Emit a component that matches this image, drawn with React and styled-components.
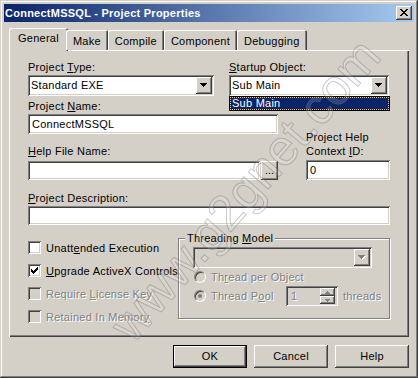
import React from 'react';
import styled, { createGlobalStyle, css } from 'styled-components';

const GlobalStyle = createGlobalStyle`
  html, body { margin: 0; padding: 0; background: #d4d0c8; }
  body { font-family: "Liberation Sans", Arial, sans-serif; font-size: 11px; letter-spacing: 0.25px; color: #000; }
  * { box-sizing: border-box; }
`;

const FACE = '#d4d0c8';

const raised = css`
  box-shadow: inset -1px -1px #404040, inset 1px 1px #fff, inset -2px -2px #808080;
`;
const sunken = css`
  box-shadow: inset 1px 1px #808080, inset -1px -1px #fff, inset 2px 2px #404040, inset -2px -2px ${FACE};
`;
const disabledText = css`
  color: #808080;
  text-shadow: 1px 1px #fff;
`;

const Window = styled.div`
  position: relative;
  overflow: hidden;
  width: 418px;
  height: 378px;
  padding: 4px;
  background: ${FACE};
  box-shadow: inset -1px -1px #404040, inset 1px 1px ${FACE}, inset -2px -2px #808080, inset 2px 2px #fff;
`;

const TitleBar = styled.div`
  display: flex;
  align-items: center;
  height: 18px;
  padding: 0 2px 0 1px;
  background: linear-gradient(to right, #0a246a, #a6caf0);
`;

const TitleText = styled.div`
  color: #fff;
  font-weight: bold;
  font-size: 11px;
  letter-spacing: 0.25px;
`;

const CloseButton = styled.div`
  margin-left: auto;
  width: 16px;
  height: 14px;
  margin-top: -1px;
  background: ${FACE};
  ${raised};
  display: flex;
  align-items: center;
  justify-content: center;
  padding-right: 1px;
`;

const Body = styled.div`
  padding: 6px 5px 0 5px;
`;

const TabStrip = styled.div`
  display: flex;
  align-items: flex-start;
  height: 22px;
  padding-left: 2px;
  position: relative;
  z-index: 2;
`;

const Tab = styled.div`
  height: ${p => (p.$active ? 23 : 20)}px;
  margin: ${p => (p.$active ? '0 -2px 0 -2px' : '2px 0 0 0')};
  padding: ${p => (p.$active ? '3px 9px 0' : '4px 7px 0')};
  line-height: 14px;
  background: ${FACE};
  border-radius: 2px 2px 0 0;
  box-shadow: inset 1px 1px #fff, inset -1px 0 #404040, inset -2px 0 #808080;
  white-space: nowrap;
`;

const Panel = styled.div`
  width: 400px;
  height: 287px;
  padding: 10px 19px 0 19px;
  background: ${FACE};
  box-shadow: inset 1px 1px #fff, inset -1px -1px #404040, inset -2px -2px #808080;
  display: flex;
  flex-direction: column;
`;

const Row = styled.div`
  display: flex;
  align-items: ${p => p.$align || 'flex-start'};
  gap: ${p => p.$gap || 0}px;
  margin-top: ${p => p.$mt || 0}px;
`;

const Column = styled.div`
  display: flex;
  flex-direction: column;
  width: ${p => (p.$w ? `${p.$w}px` : 'auto')};
  margin-top: ${p => p.$mt || 0}px;
`;

const Field = styled.div`
  position: relative;
  display: flex;
  flex-direction: column;
  width: ${p => p.$w}px;
  margin-top: ${p => p.$mt || 0}px;
`;

const Label = styled.div`
  line-height: 14px;
  margin-bottom: ${p => p.$mb ?? 1}px;
  white-space: nowrap;
`;

const ComboBox = styled.div`
  display: flex;
  width: ${p => p.$w}px;
  height: 21px;
  padding: 2px;
  background: ${p => (p.$disabled ? FACE : '#fff')};
  ${sunken};
`;

const ComboText = styled.div`
  flex: 1;
  padding-left: 1px;
  line-height: 17px;
  white-space: nowrap;
`;

const DropButton = styled.div`
  width: 16px;
  height: 17px;
  background: ${FACE};
  ${raised};
  display: flex;
  align-items: center;
  justify-content: center;
  padding: 0 1px 1px 0;
`;

const DropList = styled.div`
  position: absolute;
  left: 0;
  top: 100%;
  width: 161px;
  height: 15px;
  border: 1px solid #000;
  background: #fff;
  z-index: 3;
`;

const DropItem = styled.div`
  height: 13px;
  line-height: 11px;
  background: #0a246a;
  color: #fff;
  border: 1px dotted #e8c878;
  padding-left: 1px;
`;

const TextBox = styled.div`
  width: ${p => p.$w}px;
  height: ${p => p.$h || 20}px;
  padding: 2px 4px;
  line-height: ${p => (p.$h || 20) - 4}px;
  background: ${p => (p.$disabled ? FACE : '#fff')};
  ${sunken};
  white-space: nowrap;
`;

const InputGroup = styled.div`
  display: flex;
  gap: 1px;
`;

const SmallButton = styled.div`
  width: 17px;
  height: 19px;
  background: ${FACE};
  ${raised};
  text-align: center;
  line-height: 19px;
  letter-spacing: 0;
`;

const BottomRow = styled.div`
  display: flex;
  margin-top: 6px;
`;

const CheckList = styled.div`
  width: 150px;
  margin-top: 5px;
  display: flex;
  flex-direction: column;
`;

const CheckRow = styled.div`
  display: flex;
  align-items: center;
  gap: 5px;
  height: 23px;
  white-space: nowrap;
  ${p => p.$disabled && disabledText};
`;

const CheckBoxBox = styled.div`
  width: 13px;
  height: 13px;
  flex: none;
  background: ${p => (p.$disabled ? FACE : '#fff')};
  ${sunken};
  display: flex;
  align-items: center;
  justify-content: center;
`;

const GroupBox = styled.fieldset`
  width: 212px;
  height: 88px;
  margin: 0;
  padding: 0;
  border: 1px solid #808080;
  box-shadow: 1px 1px 0 #fff, inset 1px 1px 0 #fff;
  min-width: 0;
`;

const Legend = styled.legend`
  margin-left: 6px;
  padding: 0 2px;
  line-height: 14px;
  background: ${FACE};
  position: relative;
  z-index: 1;
`;

const GroupContent = styled.div`
  padding: 2px 0 0 14px;
  display: flex;
  flex-direction: column;
`;

const RadioRow = styled.div`
  display: flex;
  align-items: center;
  height: ${p => p.$h}px;
  white-space: nowrap;
`;

const RadioLabel = styled.div`
  display: flex;
  align-items: center;
  gap: 5px;
  width: ${p => (p.$w ? `${p.$w}px` : 'auto')};
  padding-left: 1px;
  ${disabledText};
`;

const RadioCircle = styled.div`
  width: 12px;
  height: 12px;
  flex: none;
  border-radius: 50%;
  background: ${FACE};
  border: 1px solid;
  border-color: #808080 #fff #fff #808080;
  box-shadow: inset 1px 1px #404040;
  display: flex;
  align-items: center;
  justify-content: center;
`;

const RadioDot = styled.div`
  width: 4px;
  height: 4px;
  border-radius: 50%;
  background: #808080;
`;

const SpinBox = styled.div`
  display: flex;
  width: 52px;
  height: 20px;
  padding: 2px;
  background: ${FACE};
  ${sunken};
`;

const SpinText = styled.div`
  flex: 1;
  padding-left: 3px;
  line-height: 16px;
  ${disabledText};
`;

const SpinButtons = styled.div`
  display: flex;
  flex-direction: column;
  width: 15px;
  margin-right: 1px;
`;

const SpinButton = styled.div`
  flex: 1;
  background: ${FACE};
  ${raised};
  display: flex;
  align-items: center;
  justify-content: center;
`;

const MutedText = styled.span`
  margin-left: 5px;
  ${disabledText};
`;

const ButtonRow = styled.div`
  display: flex;
  justify-content: flex-end;
  gap: 7px;
  margin-top: 8px;
`;

const Button = styled.div`
  width: 74px;
  height: 23px;
  background: ${FACE};
  text-align: center;
  line-height: 23px;
  box-shadow: ${p =>
    p.$default
      ? 'inset 0 0 0 1px #000, inset -2px -2px #404040, inset 2px 2px #fff, inset -3px -3px #808080'
      : 'inset -1px -1px #404040, inset 1px 1px #fff, inset -2px -2px #808080'};
`;

const Watermark = styled.div`
  position: absolute;
  left: 245px;
  top: 190px;
  transform: translate(-50%, -50%) rotate(-49deg);
  font-family: "Liberation Sans", Arial, sans-serif;
  font-size: 50px;
  letter-spacing: 0;
  white-space: nowrap;
  color: rgba(255, 255, 255, 0.15);
  -webkit-text-stroke: 1px rgba(110, 110, 110, 0.38);
  pointer-events: none;
  z-index: 10;
`;

const Arrow = ({ disabled }) => (
  <svg width="8" height="5" viewBox="0 0 8 5">
    {disabled && (
      <path fill="#fff" d="M1 1h7v1H1z M2 2h5v1H2z M3 3h3v1H3z M4 4h1v1H4z" />
    )}
    <path
      fill={disabled ? '#808080' : '#000'}
      d="M0 0h7v1H0z M1 1h5v1H1z M2 2h3v1H2z M3 3h1v1H3z"
    />
  </svg>
);

const SmallArrow = ({ up }) => (
  <svg width="5" height="3" viewBox="0 0 5 3">
    <path
      fill="#808080"
      d={up ? 'M2 0h1v1H2z M1 1h3v1H1z M0 2h5v1H0z' : 'M0 0h5v1H0z M1 1h3v1H1z M2 2h1v1H2z'}
    />
  </svg>
);

const CloseGlyph = () => (
  <svg width="8" height="7" viewBox="0 0 8 7">
    <path
      fill="#000"
      d="M0 0h2v1H0z M6 0h2v1H6z M1 1h2v1H1z M5 1h2v1H5z M2 2h4v1H2z M3 3h2v1H3z M2 4h4v1H2z M1 5h2v1H1z M5 5h2v1H5z M0 6h2v1H0z M6 6h2v1H6z"
    />
  </svg>
);

const CheckGlyph = () => (
  <svg width="7" height="7" viewBox="0 0 7 7">
    <path
      fill="#000"
      d="M6 0h1v3H6z M5 1h1v3H5z M4 2h1v3H4z M0 2h1v3H0z M1 3h1v3H1z M2 4h1v3H2z M3 3h1v3H3z"
    />
  </svg>
);

const Combo = ({ w, value, disabled }) => (
  <ComboBox $w={w} $disabled={disabled}>
    <ComboText>{value}</ComboText>
    <DropButton>
      <Arrow disabled={disabled} />
    </DropButton>
  </ComboBox>
);

const Check = ({ checked, disabled, children }) => (
  <CheckRow $disabled={disabled}>
    <CheckBoxBox $disabled={disabled}>{checked && <CheckGlyph />}</CheckBoxBox>
    <span>{children}</span>
  </CheckRow>
);

const tabs = ['General', 'Make', 'Compile', 'Component', 'Debugging'];

export default function App() {
  return (
    <>
      <GlobalStyle />
      <Window>
        <TitleBar>
          <TitleText>ConnectMSSQL - Project Properties</TitleText>
          <CloseButton>
            <CloseGlyph />
          </CloseButton>
        </TitleBar>
        <Body>
          <TabStrip>
            {tabs.map((t, i) => (
              <Tab key={t} $active={i === 0}>
                {t}
              </Tab>
            ))}
          </TabStrip>
          <Panel>
            <Row $gap={15}>
              <Field $w={186}>
                <Label>
                  Project <u>T</u>ype:
                </Label>
                <Combo w={186} value="Standard EXE" />
              </Field>
              <Field $w={161}>
                <Label>
                  <u>S</u>tartup Object:
                </Label>
                <Combo w={160} value="Sub Main" />
                <DropList>
                  <DropItem>Sub Main</DropItem>
                </DropList>
              </Field>
            </Row>
            <Row $gap={28} $align="flex-end">
              <Column $w={250}>
                <Field $w={250} $mt={3}>
                  <Label>
                    Project <u>N</u>ame:
                  </Label>
                  <TextBox $w={250}>ConnectMSSQL</TextBox>
                </Field>
                <Field $w={250} $mt={10}>
                  <Label $mb={3}>
                    <u>H</u>elp File Name:
                  </Label>
                  <InputGroup>
                    <TextBox $w={232} $h={19} />
                    <SmallButton>...</SmallButton>
                  </InputGroup>
                </Field>
              </Column>
              <Field $w={84}>
                <Label $mb={2}>
                  Project Help
                  <br />
                  Context <u>I</u>D:
                </Label>
                <TextBox $w={84} $h={20}>0</TextBox>
              </Field>
            </Row>
            <Field $w={362} $mt={11}>
              <Label>
                <u>P</u>roject Description:
              </Label>
              <TextBox $w={362} $h={19} />
            </Field>
            <BottomRow>
              <CheckList>
                <Check>
                  Unatt<u>e</u>nded Execution
                </Check>
                <Check checked>
                  <u>U</u>pgrade ActiveX Controls
                </Check>
                <Check disabled>
                  Require <u>L</u>icense Key
                </Check>
                <Check disabled>
                  Retained In Memor<u>y</u>
                </Check>
              </CheckList>
              <GroupBox>
                <Legend>
                  Threading <u>M</u>odel
                </Legend>
                <GroupContent>
                  <Combo w={179} value="" disabled />
                  <RadioRow $h={18}>
                    <RadioLabel>
                      <RadioCircle />
                      <span>
                        Th<u>r</u>ead per Object
                      </span>
                    </RadioLabel>
                  </RadioRow>
                  <RadioRow $h={20}>
                    <RadioLabel $w={93}>
                      <RadioCircle>
                        <RadioDot />
                      </RadioCircle>
                      <span>
                        Thread P<u>o</u>ol
                      </span>
                    </RadioLabel>
                    <SpinBox>
                      <SpinText>1</SpinText>
                      <SpinButtons>
                        <SpinButton>
                          <SmallArrow up />
                        </SpinButton>
                        <SpinButton>
                          <SmallArrow />
                        </SpinButton>
                      </SpinButtons>
                    </SpinBox>
                    <MutedText>threads</MutedText>
                  </RadioRow>
                </GroupContent>
              </GroupBox>
            </BottomRow>
          </Panel>
          <ButtonRow>
            <Button $default>OK</Button>
            <Button>Cancel</Button>
            <Button>Help</Button>
          </ButtonRow>
        </Body>
        <Watermark>www.g2gnet.com</Watermark>
      </Window>
    </>
  );
}
